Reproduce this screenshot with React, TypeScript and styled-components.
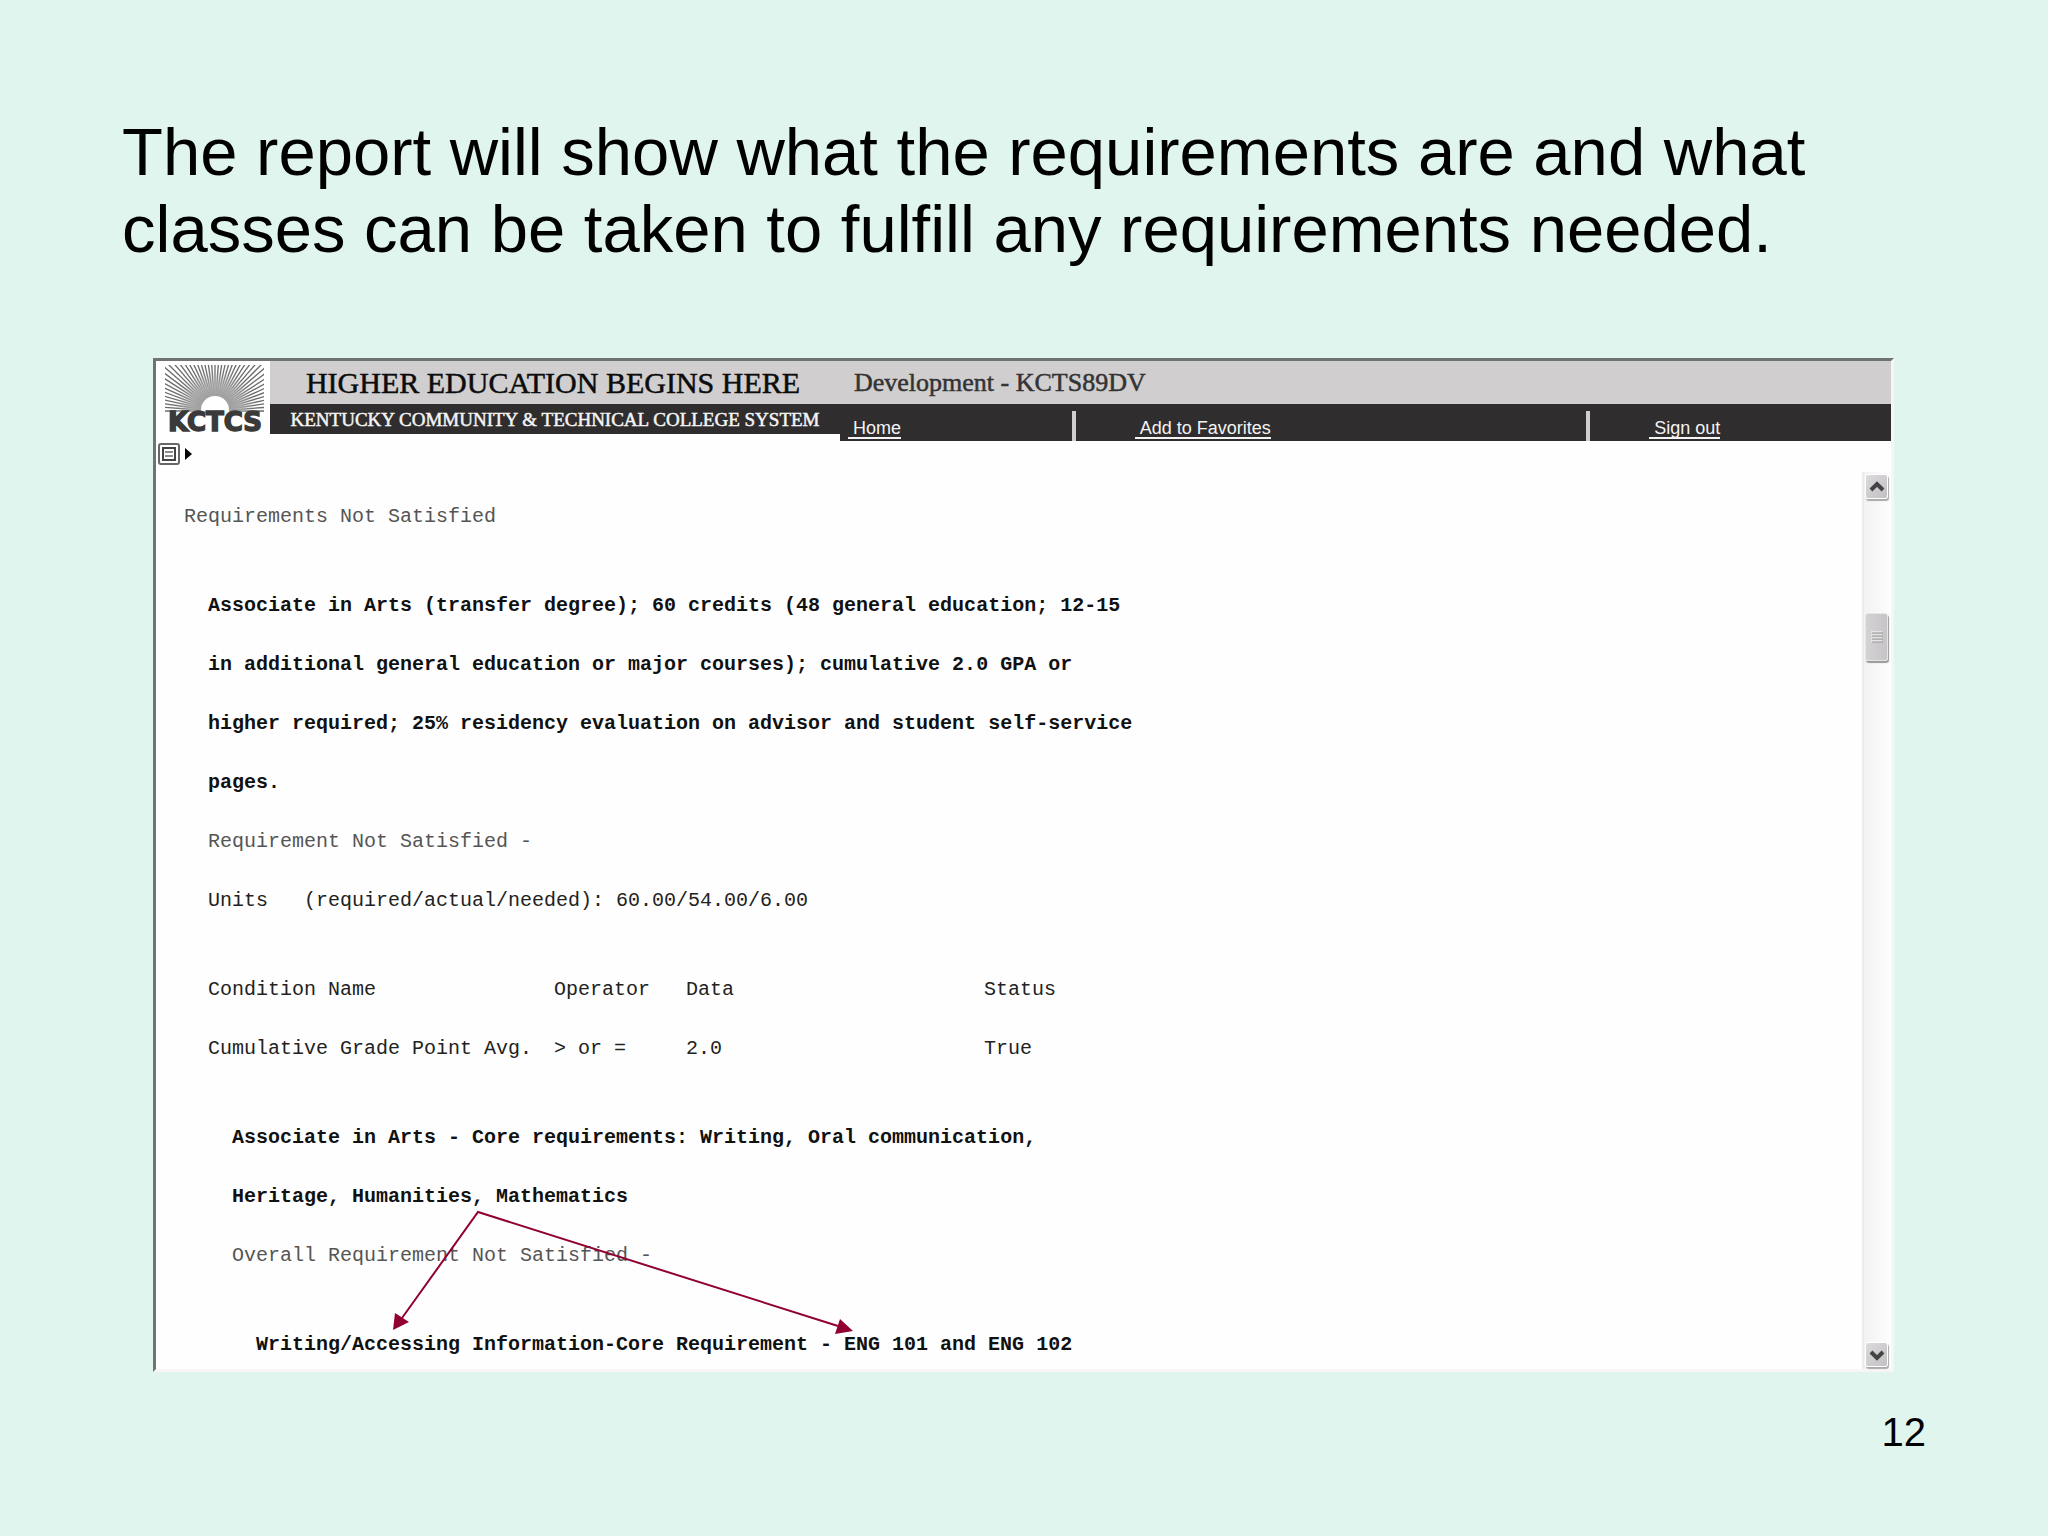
import React from "react";
import styled, { createGlobalStyle } from "styled-components";

const SANS = `"Liberation Sans", Arial, sans-serif`;
const SERIF = `"Liberation Serif", "Times New Roman", serif`;
const MONO = `"Liberation Mono", "Courier New", monospace`;

const GlobalStyle = createGlobalStyle`
  *, *::before, *::after { box-sizing: border-box; }
  body { margin: 0; background: #e0f5ed; }
`;

const Slide = styled.main`
  min-height: 100vh;
  padding: 113px 122px 64px;
  background: #e0f5ed;
  color: #000;
  font-family: ${SANS};
`;

const Title = styled.h1`
  margin: 0 32px 91px 0;
  font-size: 67px;
  line-height: 77px;
  font-weight: 400;
`;

const Frame = styled.section`
  margin: 0 32px 0 31px;
  border: 3px solid;
  border-color: #6d7471 #f6f6f6 #f6f6f6 #6d7471;
  background: #fefefe;
`;

const Header = styled.header`
  display: flex;
  align-items: flex-start;
`;

const LogoBox = styled.div`
  flex: none;
  width: 114px;
  padding: 4px 0 0 9px;
  background: #fff;
  svg { display: block; overflow: visible; }
`;

const Banner = styled.div`
  flex: none;
  width: 570px;
  text-align: center;
  font-family: ${SERIF};
  white-space: nowrap;
`;

const BannerTop = styled.div`
  height: 43px;
  padding-right: 4px;
  background: #d0cecf;
  color: #0c0c0c;
  font-size: 30px;
  line-height: 44px;
  -webkit-text-stroke: 0.5px #0c0c0c;
`;

const BannerBottom = styled.div`
  height: 30px;
  background: #2f2d2e;
  color: #f4f4f4;
  font-size: 19px;
  line-height: 32px;
  -webkit-text-stroke: 0.5px #f4f4f4;
`;

const HeaderRight = styled.div`
  flex: 1;
  min-width: 0;
`;

const Environment = styled.div`
  height: 43px;
  padding-left: 14px;
  background: #d0cecf;
  color: #333;
  font-family: ${SERIF};
  font-size: 26px;
  line-height: 43px;
  -webkit-text-stroke: 0.5px #333;
`;

const Nav = styled.nav`
  display: grid;
  grid-template-columns: 236fr 515fr 301fr;
  padding-top: 7px;
  background: #2f2d2e;
`;

const NavCell = styled.div<{ $inset: number }>`
  display: flex;
  height: 30px;
  padding: 6px 0 0 ${(p) => p.$inset}px;
  border-right: 4px solid #d0cecf;
  &:last-child { border-right: 0; }
`;

const NavLink = styled.a`
  height: 22px;
  padding-left: 5px;
  border-bottom: 2px solid #f4f4f4;
  color: #f4f4f4;
  font-size: 18px;
  line-height: 23px;
  text-decoration: none;
  white-space: nowrap;
`;

const Toolbar = styled.div`
  display: flex;
  height: 31px;
  padding: 2px;
`;

const MenuButton = styled.button`
  display: flex;
  align-items: center;
  gap: 5px;
  height: 22px;
  padding: 0;
  border: 0;
  background: none;
`;

const Body = styled.div`
  display: flex;
`;

const Report = styled.article`
  position: relative;
  flex: 1;
  min-width: 0;
  padding: 31px 0 11px 28px;
  font-family: ${MONO};
  font-size: 20px;
  line-height: 27px;
  color: #222;
`;

const Block = styled.div<{ $level: number }>`
  display: grid;
  gap: 32px;
  margin-left: ${(p) => p.$level * 24}px;
  margin-bottom: 62px;
  &:last-of-type { margin-bottom: 0; }
`;

const Line = styled.p<{ $tone?: "strong" | "muted" }>`
  margin: 0;
  white-space: pre;
  font-weight: ${(p) => (p.$tone === "strong" ? 700 : 400)};
  color: ${(p) => (p.$tone === "strong" ? "#111" : p.$tone === "muted" ? "#555" : "#222")};
`;

const Conditions = styled.table`
  width: 880px;
  margin: 0 0 62px 24px;
  border-collapse: collapse;
  table-layout: fixed;
  th, td { padding: 0; font-weight: 400; text-align: left; }
  th { padding-bottom: 32px; }
`;

const Column = styled.col<{ $width?: number }>`
  width: ${(p) => (p.$width ? `${p.$width}px` : "auto")};
`;

const Arrows = styled.svg`
  position: absolute;
  left: 0;
  top: 0;
  width: 100%;
  height: 100%;
  pointer-events: none;
`;

const Scrollbar = styled.div`
  display: flex;
  flex: none;
  flex-direction: column;
  width: 29px;
  padding: 2px 3px 2px 1px;
  border-left: 2px solid #ececec;
  background: linear-gradient(90deg, #f3f1f3, #fefefe);
`;

const ScrollButton = styled.button`
  display: grid;
  place-items: center;
  flex: none;
  height: 25px;
  padding: 0;
  border: 1px solid #fff;
  border-radius: 3px;
  background: linear-gradient(135deg, #dcdadc, #c2c0c2);
  box-shadow: 1px 2px 1px #aaa;
`;

const TrackSpace = styled.div<{ $grow: number }>`
  flex: ${(p) => p.$grow} 1 0;
`;

const Thumb = styled.div`
  display: grid;
  place-items: center;
  flex: none;
  height: 48px;
  border: 1px solid #e6e6e6;
  border-radius: 3px;
  background: linear-gradient(90deg, #d4d2d4, #c6c4c6);
  box-shadow: 1px 2px 1px #999;
`;

const PageNumber = styled.footer`
  margin-top: 37px;
  text-align: right;
  font-size: 40px;
  line-height: 46px;
`;

const RAYS = Array.from({ length: 45 }, (_, i) => Math.PI + (i * Math.PI) / 44);

function Logo() {
  return (
    <svg width="100" height="76" viewBox="0 0 100 76" role="img" aria-label="KCTCS">
      <defs>
        <clipPath id="sky"><rect width="99" height="47" /></clipPath>
        <radialGradient id="glow" gradientUnits="userSpaceOnUse" cx="50" cy="45" r="40">
          <stop offset="0.35" stopColor="#a0a0a0" />
          <stop offset="0.6" stopColor="#b0b0b0" stopOpacity="0.8" />
          <stop offset="1" stopColor="#bbb" stopOpacity="0" />
        </radialGradient>
      </defs>
      <g clipPath="url(#sky)">
        {RAYS.map((a) => (
          <line
            key={a}
            x1={50 + 14 * Math.cos(a)}
            y1={46 + 14 * Math.sin(a)}
            x2={50 + 80 * Math.cos(a)}
            y2={46 + 80 * Math.sin(a)}
            stroke="#6a6a6a"
            strokeWidth="1.3"
          />
        ))}
        <circle cx="50" cy="45" r="40" fill="url(#glow)" />
        <circle cx="50" cy="45" r="14" fill="#fff" />
      </g>
      <text
        x="50" y="66" textAnchor="middle" fill="#3a3a3a" stroke="#3a3a3a" strokeWidth="1.5"
        fontFamily="DejaVu Sans, sans-serif" fontWeight="700" fontSize="26"
      >KCTCS</text>
    </svg>
  );
}

function MenuIcon() {
  return (
    <>
      <svg width="22" height="22" viewBox="0 0 22 22" aria-hidden="true">
        <rect x="1" y="1" width="20" height="20" rx="2" fill="#fff" stroke="#666" strokeWidth="2" />
        <rect x="5" y="5" width="12" height="12" fill="#fff" stroke="#444" strokeWidth="2" />
        <path d="M7 9h8M7 13h8" stroke="#666" strokeWidth="1.500" />
      </svg>
      <svg width="7" height="12" viewBox="0 0 7 12" aria-hidden="true">
        <path d="M0 0L7 6L0 12Z" fill="#000" />
      </svg>
    </>
  );
}

function Chevron({ up }: { up?: boolean }) {
  return (
    <svg width="16" height="12" viewBox="0 0 16 12" aria-hidden="true">
      <path d={up ? "M2 9L8 3L14 9" : "M2 3L8 9L14 3"} fill="none" stroke="#444" strokeWidth="4" />
    </svg>
  );
}

export default function App() {
  return (
    <Slide>
      <GlobalStyle />
      <Title>
        The report will show what the requirements are and what classes can be taken to fulfill any
        requirements needed.
      </Title>
      <Frame>
        <Header>
          <LogoBox><Logo /></LogoBox>
          <Banner>
            <BannerTop>HIGHER EDUCATION BEGINS HERE</BannerTop>
            <BannerBottom>KENTUCKY COMMUNITY &amp; TECHNICAL COLLEGE SYSTEM</BannerBottom>
          </Banner>
          <HeaderRight>
            <Environment>Development - KCTS89DV</Environment>
            <Nav>
              <NavCell $inset={8}><NavLink href="#home">Home</NavLink></NavCell>
              <NavCell $inset={59}><NavLink href="#favorites">Add to Favorites</NavLink></NavCell>
              <NavCell $inset={59}><NavLink href="#signout">Sign out</NavLink></NavCell>
            </Nav>
          </HeaderRight>
        </Header>
        <Toolbar>
          <MenuButton aria-label="Menu"><MenuIcon /></MenuButton>
        </Toolbar>
        <Body>
          <Report>
            <Block $level={0}>
              <Line $tone="muted">Requirements Not Satisfied</Line>
            </Block>
            <Block $level={1}>
              <Line $tone="strong">Associate in Arts (transfer degree); 60 credits (48 general education; 12-15</Line>
              <Line $tone="strong">in additional general education or major courses); cumulative 2.0 GPA or</Line>
              <Line $tone="strong">higher required; 25% residency evaluation on advisor and student self-service</Line>
              <Line $tone="strong">pages.</Line>
              <Line $tone="muted">Requirement Not Satisfied -</Line>
              <Line>{"Units   (required/actual/needed): 60.00/54.00/6.00"}</Line>
            </Block>
            <Conditions>
              <colgroup>
                <Column $width={346} />
                <Column $width={132} />
                <Column $width={298} />
                <Column />
              </colgroup>
              <thead>
                <tr>
                  <th>Condition Name</th>
                  <th>Operator</th>
                  <th>Data</th>
                  <th>Status</th>
                </tr>
              </thead>
              <tbody>
                <tr>
                  <td>Cumulative Grade Point Avg.</td>
                  <td>&gt; or =</td>
                  <td>2.0</td>
                  <td>True</td>
                </tr>
              </tbody>
            </Conditions>
            <Block $level={2}>
              <Line $tone="strong">Associate in Arts - Core requirements: Writing, Oral communication,</Line>
              <Line $tone="strong">Heritage, Humanities, Mathematics</Line>
              <Line $tone="muted">Overall Requirement Not Satisfied -</Line>
            </Block>
            <Block $level={3}>
              <Line $tone="strong">Writing/Accessing Information-Core Requirement - ENG 101 and ENG 102</Line>
            </Block>
            <Arrows aria-hidden="true">
              <path d="M246 846L322 740L682 854" fill="none" stroke="#900033" strokeWidth="2" />
              <path d="M237 858L239 841L253 850Z" fill="#900033" />
              <path d="M697 859L684 847L679 862Z" fill="#900033" />
            </Arrows>
          </Report>
          <Scrollbar>
            <ScrollButton aria-label="Scroll up"><Chevron up /></ScrollButton>
            <TrackSpace $grow={1} />
            <Thumb>
              <svg width="12" height="12" viewBox="0 0 12 12" aria-hidden="true">
                <path d="M0 1h11M0 4h11M0 7h11M0 10h11" stroke="#fff" />
                <path d="M1 2h11M1 5h11M1 8h11M1 11h11" stroke="#999" />
              </svg>
            </Thumb>
            <TrackSpace $grow={6} />
            <ScrollButton aria-label="Scroll down"><Chevron /></ScrollButton>
          </Scrollbar>
        </Body>
      </Frame>
      <PageNumber>12</PageNumber>
    </Slide>
  );
}
